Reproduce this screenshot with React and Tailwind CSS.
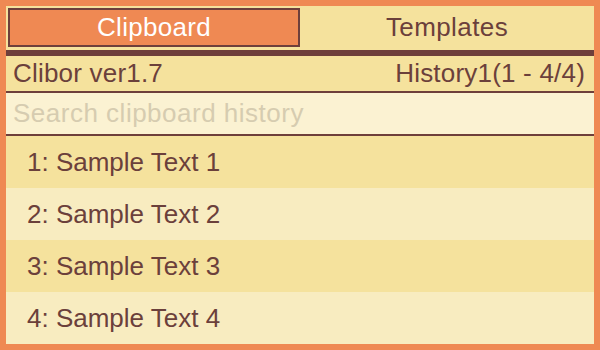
import React from 'react';

const rows = ['1: Sample Text 1', '2: Sample Text 2', '3: Sample Text 3', '4: Sample Text 4'];

const App = () => {
  return (
    <div className="w-[600px] h-[350px] bg-[#ef8953] p-[6px] font-['Liberation_Sans',Arial,sans-serif] text-[#6b403b]">
      <div className="flex flex-col h-full bg-[#f5e29d]">
        {/* tabs */}
        <div className="flex h-[44px] pt-[2px] pb-[3px] pl-[2px]">
          <div className="w-[292px] h-[39px] border-2 border-[#6e3f3b] bg-[#ef8953] flex items-center justify-center text-white text-[26px] tracking-[0.3px]">
            Clipboard
          </div>
          <div className="flex-1 flex items-center justify-center text-[26px] tracking-[0.4px]">Templates</div>
        </div>
        <div className="h-[6px] bg-[#6e3f3b]" />

        {/* header */}
        <div className="h-[35px] flex items-center justify-between pl-[7px] pr-[9px] text-[26px] tracking-[0.2px]">
          <span>Clibor ver1.7</span>
          <span>History1(1 - 4/4)</span>
        </div>
        <div className="h-[2px] bg-[#6e3f3b]" />

        {/* search */}
        <div className="h-[41px] bg-[#fbf2d2] flex items-center pl-[7px]">
          <input
            className="w-full bg-transparent outline-none text-[26px] tracking-[0.5px] placeholder:text-[#d6ccb0]"
            placeholder="Search clipboard history"
          />
        </div>
        <div className="h-[2px] bg-[#6e3f3b]" />

        {/* history list */}
        <div className="flex-1 flex flex-col">
          {rows.map((text, i) => (
            <div
              key={i}
              className={`flex-1 flex items-center pl-[21px] pt-[1px] text-[26px] ${i % 2 === 0 ? 'bg-[#f5e29d]' : 'bg-[#f8ecc0]'}`}
            >
              {text}
            </div>
          ))}
        </div>
      </div>
    </div>
  );
};

export default App;
